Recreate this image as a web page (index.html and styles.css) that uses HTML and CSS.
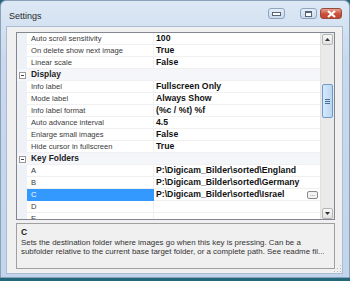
FILE: index.html
```html
<!DOCTYPE html>
<html lang="en">
<head>
    <meta charset="UTF-8">
    <title>Settings</title>
    <link rel="stylesheet" href="styles.css">
</head>
<body>
    <div class="window">
        <div class="titlebar">
            <span class="title">Settings</span>
            <div class="caption-buttons">
                <span class="cap-btn min"><i></i></span>
                <span class="cap-btn max"><i></i></span>
                <span class="cap-btn close">
                    <svg width="11" height="8" viewBox="0 0 11 8"><path d="M2 1 L9 7 M9 1 L2 7" stroke="#fff" stroke-width="2.2"/></svg>
                </span>
            </div>
        </div>

        <div class="client">
            <!-- Property grid -->
            <div class="grid">
                <div class="rows">
                    <div class="row"><span class="gutter"></span><span class="label">Auto scroll sensitivity</span><span class="value">100</span></div>
                    <div class="row"><span class="gutter"></span><span class="label">On delete show next image</span><span class="value">True</span></div>
                    <div class="row"><span class="gutter"></span><span class="label">Linear scale</span><span class="value">False</span></div>
                    <div class="row category"><span class="gutter"><span class="expander"></span></span><span class="cat-label">Display</span></div>
                    <div class="row"><span class="gutter"></span><span class="label">Info label</span><span class="value">Fullscreen Only</span></div>
                    <div class="row"><span class="gutter"></span><span class="label">Mode label</span><span class="value">Always Show</span></div>
                    <div class="row"><span class="gutter"></span><span class="label">Info label format</span><span class="value">(%c / %t) %f</span></div>
                    <div class="row"><span class="gutter"></span><span class="label">Auto advance interval</span><span class="value">4.5</span></div>
                    <div class="row"><span class="gutter"></span><span class="label">Enlarge small images</span><span class="value">False</span></div>
                    <div class="row"><span class="gutter"></span><span class="label">Hide cursor in fullscreen</span><span class="value">True</span></div>
                    <div class="row category"><span class="gutter"><span class="expander"></span></span><span class="cat-label">Key Folders</span></div>
                    <div class="row"><span class="gutter"></span><span class="label">A</span><span class="value">P:\Digicam_Bilder\sorted\England</span></div>
                    <div class="row"><span class="gutter"></span><span class="label">B</span><span class="value">P:\Digicam_Bilder\sorted\Germany</span></div>
                    <div class="row selected"><span class="gutter"></span><span class="label">C</span><span class="value">P:\Digicam_Bilder\sorted\Israel<span class="ellipsis-btn">...</span></span></div>
                    <div class="row"><span class="gutter"></span><span class="label">D</span><span class="value"></span></div>
                    <div class="row"><span class="gutter"></span><span class="label">E</span><span class="value"></span></div>
                </div>
                <div class="scrollbar">
                    <div class="sb-btn">
                        <svg width="5" height="3" viewBox="0 0 5 3"><path d="M0 3 L2.5 0 L5 3 Z" fill="#333"/></svg>
                    </div>
                    <div class="sb-track">
                        <div class="sb-thumb"><i></i><i></i><i></i></div>
                    </div>
                    <div class="sb-btn">
                        <svg width="5" height="3" viewBox="0 0 5 3"><path d="M0 0 L2.5 3 L5 0 Z" fill="#333"/></svg>
                    </div>
                </div>
            </div>

            <!-- Description panel -->
            <div class="description">
                <div class="desc-title">C</div>
                <div class="desc-text">Sets the destination folder where images go when this key is pressing. Can be a subfolder relative to the current base target folder, or a complete path. See readme fil...</div>
            </div>

            <div class="grip"></div>
        </div>
    </div>
</body>
</html>
```

FILE: styles.css
```css
body { margin: 0; background: #22687a; font-family: "Liberation Sans", Arial, sans-serif; }
.window { width: 350px; height: 278px; box-sizing: border-box; border: 1px solid #8aa1bb; border-radius: 6px 6px 0 0; background: linear-gradient(#dde8f5, #c8d9ec 60px, #c3d5ea); padding: 0 6px 3px 5px; display: flex; flex-direction: column; }
.titlebar { height: 25px; display: flex; align-items: flex-start; }
.title { font-size: 9px; color: #2a2a2a; margin: 10px 0 0 3px; }
.caption-buttons { margin-left: auto; margin-top: 7px; margin-right: 1px; display: flex; gap: 3px; }
.cap-btn { height: 11px; box-sizing: border-box; border: 1px solid #8ea4c0; border-radius: 3px; background: linear-gradient(#e5eef8, #c9d8ea); display: flex; align-items: center; justify-content: center; }
.cap-btn.min { width: 17px; margin-right: 12px; }
.cap-btn.min i { width: 7px; height: 2px; background: #fff; border: 1px solid #55657a; }
.cap-btn.max { width: 17px; }
.cap-btn.max i { width: 5px; height: 3px; border: 1px solid #55657a; border-top-width: 2px; background: #fff; }
.cap-btn.close { width: 22px; border-color: #9a4a3d; background: linear-gradient(#e8a393, #c9503a 55%, #c4462f); }
.client { flex: 1; background: #f0f0f0; border: 1px solid #a9bcd3; padding: 5px 7px 0 9px; position: relative; display: flex; flex-direction: column; }
.grid { height: 188px; box-sizing: border-box; border: 1px solid #828790; background: #fff; display: flex; overflow: hidden; }
.rows { flex: 1; overflow: hidden; }
.row { height: 12px; display: flex; font-size: 7.6px; line-height: 11px; }
.gutter { width: 10px; flex: none; background: #eef1f6; display: flex; align-items: center; justify-content: center; }
.label { width: 122px; flex: none; padding-left: 4px; color: #3a3a3a; border-bottom: 1px solid #f0f0f0; border-right: 1px solid #f0f0f0; white-space: nowrap; overflow: hidden; }
.value { flex: 1; padding-left: 2px; font-weight: bold; font-size: 8.7px; color: #111; border-bottom: 1px solid #f0f0f0; white-space: nowrap; position: relative; }
.category { background: #f4f6fa; }
.category .gutter { background: #f4f6fa; }
.cat-label { flex: 1; padding-left: 4px; font-weight: bold; font-size: 8.4px; color: #222; border-bottom: 1px solid #f0f0f0; }
.expander { width: 7px; height: 7px; box-sizing: border-box; border: 1px solid #9a9a9a; background: #fff; position: relative; }
.expander::after { content: ""; position: absolute; left: 1px; top: 2px; width: 3px; height: 1px; background: #444; }
.selected .label { background: #3399ff; color: #fff; border-color: #3399ff; }
.ellipsis-btn { position: absolute; right: 2px; top: 2px; width: 11px; height: 8px; box-sizing: border-box; border: 1px solid #8a8a8a; border-radius: 2px; background: #f3f3f3; font-size: 6px; line-height: 5px; text-align: center; font-weight: normal; color: #333; }
.scrollbar { width: 13px; flex: none; background: #eaeaea; border-left: 1px solid #e2e2e2; display: flex; flex-direction: column; padding-top: 1px; }
.sb-btn { height: 11px; margin: 0 1px; box-sizing: border-box; border: 1px solid #b5b5b5; border-radius: 2px; background: linear-gradient(#f7f7f7, #e2e2e2); display: flex; align-items: center; justify-content: center; }
.sb-track { flex: 1; padding-top: 39px; }
.sb-thumb { height: 34px; margin: 0 1px; box-sizing: border-box; border: 1px solid #6d9ac8; border-radius: 2px; background: linear-gradient(90deg, #d7e9fa, #b9d6f3); display: flex; flex-direction: column; align-items: center; justify-content: center; gap: 1px; }
.sb-thumb i { width: 5px; height: 1px; background: #4a6f96; }
.description { margin-top: 3px; height: 46px; box-sizing: border-box; border: 1px solid #a0a0a0; padding: 3px 4px; color: #222; }
.desc-title { font-weight: bold; font-size: 8.6px; line-height: 10px; margin-bottom: 2px; }
.desc-text { font-size: 7.9px; line-height: 8.5px; color: #333; }
.grip { position: absolute; right: 1px; bottom: 1px; width: 8px; height: 8px; background: radial-gradient(circle, #b8b8b8 0.7px, transparent 1px) 0 0 / 3px 3px; clip-path: polygon(100% 0, 100% 100%, 0 100%); }
```
